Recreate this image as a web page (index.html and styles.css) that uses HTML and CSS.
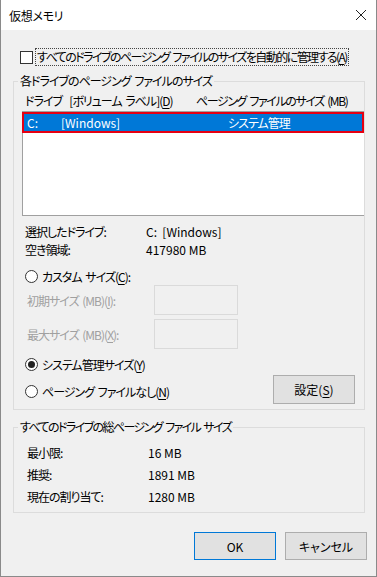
FILE: index.html
```html
<!DOCTYPE html>
<html lang="ja">
<head>
    <meta charset="UTF-8">
    <meta name="viewport" content="width=device-width, initial-scale=1.0">
    <title>仮想メモリ</title>
    <link rel="stylesheet" href="styles.css">
</head>
<body>

<div class="window">
    <div class="titlebar">
        <span class="title">仮想メモリ</span>
        <svg class="close" width="12" height="12" viewBox="0 0 12 12">
            <path d="M1 1 L11 11 M11 1 L1 11" stroke="#222" stroke-width="1" fill="none"/>
        </svg>
    </div>

    <div class="content">
        <div class="auto-row">
            <span class="checkbox"></span>
            <span class="focus-label">すべてのドライブのページング ファイルのサイズを自動的に管理する(<u>A</u>)</span>
        </div>

        <fieldset class="group group-drives">
            <legend>各ドライブのページング ファイルのサイズ</legend>
            <div class="list-head">
                <span class="col-drive">ドライブ&nbsp;&nbsp;[ボリューム ラベル](<u>D</u>)</span>
                <span class="col-size">ページング ファイルのサイズ (MB)</span>
            </div>
            <div class="listbox">
                <div class="list-row selected">
                    <span class="cell-letter latin">C:</span>
                    <span class="cell-label latin">[Windows]</span>
                    <span class="cell-size">システム管理</span>
                </div>
            </div>

            <div class="info">
                <div class="info-row"><span class="info-key">選択したドライブ:</span><span class="latin">C:&nbsp;&nbsp;[Windows]</span></div>
                <div class="info-row"><span class="info-key">空き領域:</span><span class="latin">417980 MB</span></div>
            </div>

            <div class="radio-row custom">
                <span class="radio"></span>
                <span>カスタム サイズ(<u>C</u>):</span>
            </div>
            <div class="size-row">
                <span class="size-label">初期サイズ (MB)(<u>I</u>):</span>
                <span class="size-input"></span>
            </div>
            <div class="size-row">
                <span class="size-label">最大サイズ (MB)(<u>X</u>):</span>
                <span class="size-input"></span>
            </div>

            <div class="radio-row system">
                <span class="radio checked"></span>
                <span>システム管理サイズ(<u>Y</u>)</span>
            </div>
            <div class="none-row">
                <div class="radio-row">
                    <span class="radio"></span>
                    <span>ページング ファイルなし(<u>N</u>)</span>
                </div>
                <button type="button" class="btn btn-set">設定(<u>S</u>)</button>
            </div>
        </fieldset>

        <fieldset class="group group-total">
            <legend>すべてのドライブの総ページング ファイル サイズ</legend>
            <div class="total-row"><span class="total-key">最小限:</span><span class="latin">16 MB</span></div>
            <div class="total-row"><span class="total-key">推奨:</span><span class="latin">1891 MB</span></div>
            <div class="total-row"><span class="total-key">現在の割り当て:</span><span class="latin">1280 MB</span></div>
        </fieldset>

        <div class="actions">
            <button type="button" class="btn btn-ok latin">OK</button>
            <button type="button" class="btn">キャンセル</button>
        </div>
    </div>
</div>

</body>
</html>
```

FILE: styles.css
```css
* {
    box-sizing: border-box;
}
body {
    margin: 0;
    font-family: "Noto Sans CJK JP", "Noto Sans", sans-serif;
    font-size: 12px;
    font-feature-settings: "palt";
    letter-spacing: -1px;
    word-spacing: 2px;
    white-space: nowrap;
    color: #000;
    background: #fff;
}
.latin {
    letter-spacing: 0;
    word-spacing: 0;
}
u {
    text-decoration-thickness: 1px;
    text-underline-offset: 2px;
}
.window {
    width: 377px;
    height: 577px;
    background: #f0f0f0;
    border: 1px solid #8a8a8a;
    border-top: none;
}
.titlebar {
    height: 30px;
    background: #fff;
    display: flex;
    align-items: center;
    justify-content: space-between;
    padding: 0 9px 0 8px;
}
.title {
    letter-spacing: -0.3px;
}
.content {
    padding: 0 11px 0 12px;
}

/* auto-manage checkbox */
.auto-row {
    display: flex;
    align-items: center;
    height: 18px;
    margin-top: 18px;
    padding-left: 7px;
}
.checkbox {
    width: 13px;
    height: 13px;
    border: 1px solid #333;
    background: #fff;
    margin-right: 2px;
}
.focus-label {
    border: 1px dotted #444;
    padding: 0 1px;
    line-height: 16px;
    letter-spacing: -1.55px;
}

/* group boxes */
.group {
    margin: 7px 0 0;
    padding: 0;
    border: 1px solid #dcdcdc;
    min-width: 0;
}
.group legend {
    margin-left: 4px;
    padding: 0 2px;
    line-height: 16px;
}
.group-drives {
    height: 337px;
}
.list-head {
    display: flex;
    height: 16px;
    line-height: 16px;
    margin-top: 4px;
    padding-left: 11px;
}
.col-drive {
    width: 171px;
}
.col-size {
    letter-spacing: -1.4px;
}
.listbox {
    height: 105px;
    margin: 2px 0 0 8px;
    background: #fff;
    border: 1px solid #a0a0a0;
    border-right: none;
}
.list-row {
    display: flex;
    align-items: center;
    height: 21px;
}
.list-row.selected {
    background: #0078d7;
    color: #fff;
    border: 2px solid #e60012;
    margin: 0 0 0 -1px;
}
.cell-letter {
    width: 37px;
    padding-left: 3px;
}
.cell-label {
    width: 167px;
}

/* selected drive info */
.info {
    margin-top: 7px;
    padding-left: 11px;
}
.info-row {
    display: flex;
    height: 18px;
    line-height: 18px;
}
.info-key {
    width: 121px;
}

/* radios */
.radio-row {
    display: flex;
    align-items: center;
    height: 18px;
    padding-left: 11px;
}
.radio {
    width: 13px;
    height: 13px;
    border: 1px solid #333;
    border-radius: 50%;
    background: #fff;
    margin-right: 4px;
    display: flex;
    align-items: center;
    justify-content: center;
}
.radio.checked::after {
    content: "";
    width: 7px;
    height: 7px;
    border-radius: 50%;
    background: #222;
}
.radio-row.custom {
    margin-top: 8px;
}
.size-row {
    display: flex;
    align-items: center;
    padding-left: 13px;
    margin-top: 4px;
    color: #a0a0a0;
}
.radio-row.custom + .size-row {
    margin-top: 0;
}
.size-label {
    width: 127px;
}
.size-input {
    width: 84px;
    height: 30px;
    border: 1px solid #dadada;
}
.radio-row.system {
    margin-top: 6px;
}
.none-row {
    display: flex;
    align-items: center;
    justify-content: space-between;
    margin-top: 2px;
    padding-right: 9px;
}
.radio-row.system + .none-row .radio-row {
    margin-top: 4px;
}

/* buttons */
.btn {
    font: inherit;
    font-feature-settings: "palt";
    color: #000;
    width: 82px;
    height: 28px;
    background: #e1e1e1;
    border: 1px solid #adadad;
    padding: 0;
}
.btn-set {
    height: 29px;
}
.btn-ok {
    border-color: #0078d7;
}

/* totals */
.group-total {
    margin-top: 9px;
    height: 94px;
}
.group-total legend {
    letter-spacing: -1.6px;
}
.total-row {
    display: flex;
    height: 22px;
    line-height: 22px;
    padding-left: 13px;
}
.total-row:first-of-type {
    margin-top: 7px;
}
.total-key {
    width: 121px;
}
.actions {
    display: flex;
    justify-content: flex-end;
    gap: 9px;
    margin-top: 19px;
    margin-right: -2px;
}
```
